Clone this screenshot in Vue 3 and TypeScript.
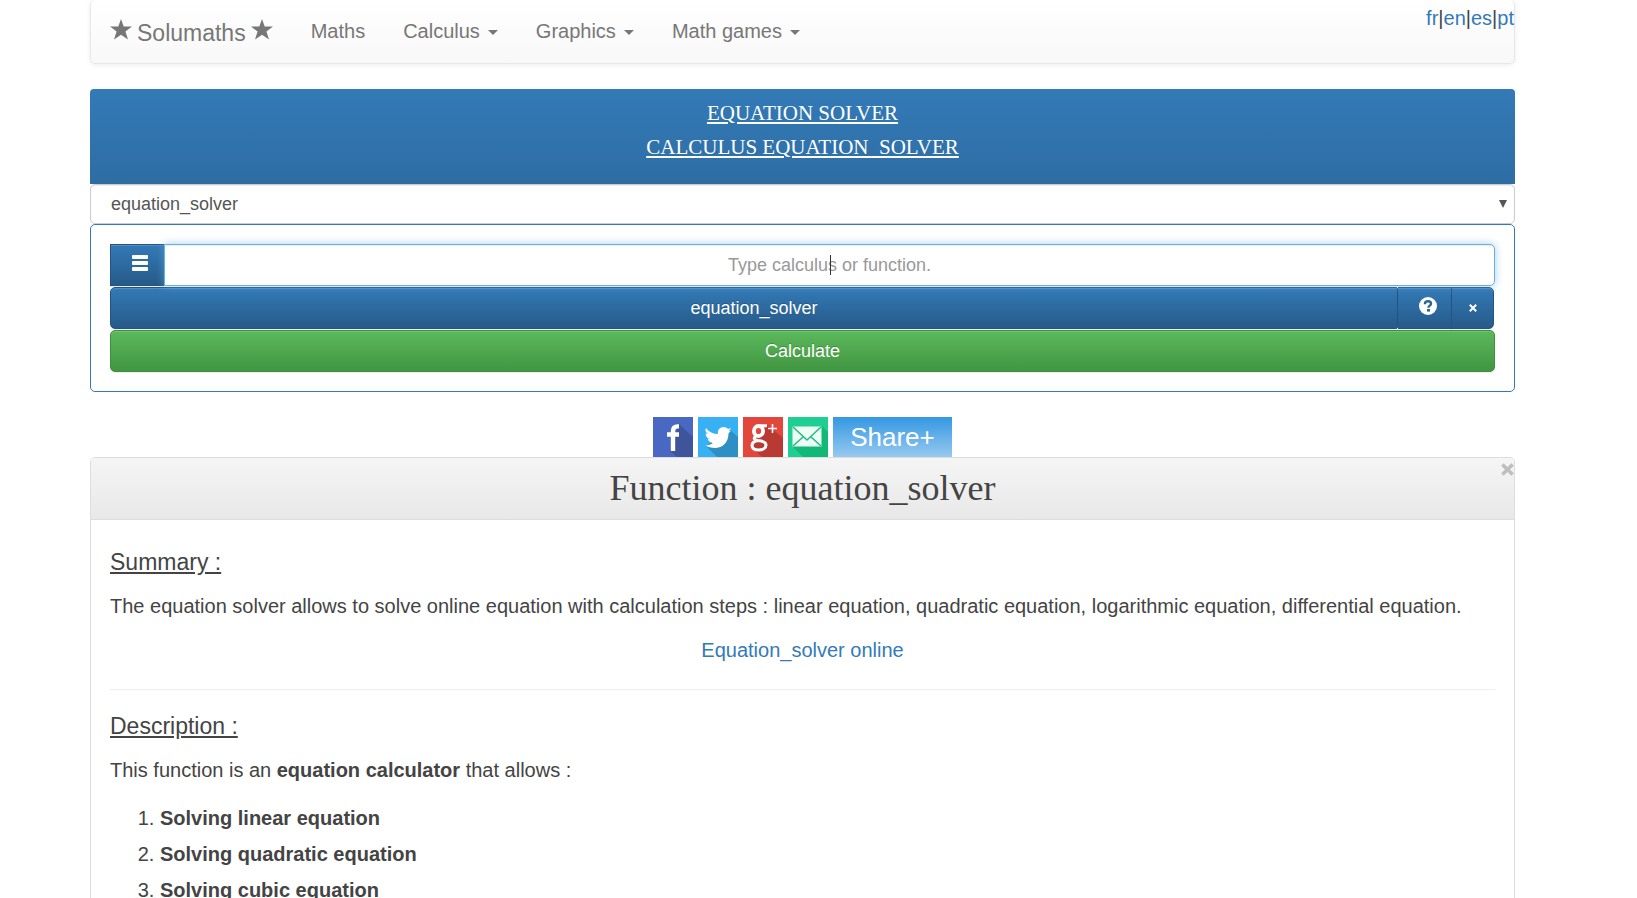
<script setup lang="ts">
import { ref } from 'vue'

interface MenuEntry {
  label: string
  dropdown: boolean
}

const menu: MenuEntry[] = [
  { label: 'Maths', dropdown: false },
  { label: 'Calculus', dropdown: true },
  { label: 'Graphics', dropdown: true },
  { label: 'Math games', dropdown: true },
]
const languages: string[] = ['fr', 'en', 'es', 'pt']
const abilities: string[] = [
  'Solving linear equation',
  'Solving quadratic equation',
  'Solving cubic equation',
]
const selected = ref('equation_solver')
const expression = ref('')
const star = '11,0 13.7,7.6 22,7.6 15.4,12.6 18,20.5 11,15.8 4,20.5 6.6,12.6 0,7.6 8.3,7.6'
</script>

<template>
  <div class="page">
    <header class="navbar">
      <a class="brand" href="#">
        <svg class="star" viewBox="0 0 22 21" aria-hidden="true"><polygon :points="star" /></svg>
        <span>Solumaths</span>
        <svg class="star" viewBox="0 0 22 21" aria-hidden="true"><polygon :points="star" /></svg>
      </a>
      <nav class="menu">
        <a v-for="item in menu" :key="item.label" href="#">
          {{ item.label }}<i v-if="item.dropdown" class="caret"></i>
        </a>
      </nav>
      <div class="languages">
        <template v-for="(code, i) in languages" :key="code"><span v-if="i > 0">|</span><a href="#">{{ code }}</a></template>
      </div>
    </header>

    <main>
      <div class="banner">
        <h1><a href="#">EQUATION SOLVER</a></h1>
        <h2><a href="#">CALCULUS EQUATION_SOLVER</a></h2>
      </div>

      <div class="picker">
        <select v-model="selected" aria-label="Function">
          <option value="equation_solver">equation_solver</option>
        </select>
        <svg class="arrow" viewBox="0 0 8 8" aria-hidden="true"><path d="M0 0h8L4 8z" /></svg>
      </div>

      <form class="calculator" @submit.prevent>
        <div class="row">
          <button type="button" class="btn primary menu-button" aria-label="Menu">
            <svg width="16" height="17" viewBox="0 0 16 17" aria-hidden="true">
              <rect width="16" height="4" rx="1" /><rect y="6" width="16" height="4" rx="1" /><rect y="12" width="16" height="4" rx="1" />
            </svg>
          </button>
          <div class="entry">
            <input v-model="expression" type="text" placeholder="Type calculus or function." aria-label="Calculus or function" />
            <span class="text-cursor"></span>
          </div>
        </div>
        <div class="row functions">
          <button type="button" class="btn primary function-button">equation_solver</button>
          <button type="button" class="btn primary help-button" aria-label="Help">
            <svg width="18" height="18" viewBox="0 0 18 18" aria-hidden="true">
              <circle cx="9" cy="9" r="9" />
              <path d="M6 7.2V6.6C6 4.9 7.2 4.2 9 4.2s3 .8 3 2.5c0 2-2.6 1.9-2.6 4" fill="none" stroke="#2a6496" stroke-width="2.4" />
              <path d="M8 12h3v2.6H8z" fill="#2a6496" />
            </svg>
          </button>
          <button type="button" class="btn primary remove-button" aria-label="Remove">
            <svg width="8" height="8" viewBox="0 0 8 8" aria-hidden="true"><path d="M.8.8l6.4 6.4M7.2.8L.8 7.2" fill="none" stroke="#fff" stroke-width="2" /></svg>
          </button>
        </div>
        <button type="submit" class="btn success">Calculate</button>
      </form>

      <div class="share">
        <a href="#" aria-label="Facebook">
          <svg viewBox="0 0 40 40"><path fill="#4968c4" d="M0 0h40v40H0z" /><path fill="#3e559c" d="M26 7l14 13v20H24l-7-6z" />
            <path fill="none" stroke="#fff" stroke-width="4.4" d="M20 34V14q0-4.600 4.600-4.600H26M14 17.500h12" />
          </svg>
        </a>
        <a href="#" aria-label="Twitter">
          <svg viewBox="0 0 40 40"><path fill="#37b1f3" d="M0 0h40v40H0z" /><path fill="#2e8fc5" d="M31 12l9 8v20H19L8 29z" />
            <path fill="#fff" d="M8 11c3 4 7 6 12 6-.8-4 2-7 5.500-7 2 0 3.500.8 4.500 2l3-1-2 3 2-.5-2.500 3C30.500 26 24 31 17 31c-4 0-7-1-9.500-2.500 3 0 5.500-.8 7.500-2.400-2.500-.3-4.500-1.700-5.300-4h2.300c-2.600-.8-4.200-2.800-4.400-5.700l2.500.7C7.500 15.500 7 13 8 11z" />
          </svg>
        </a>
        <a href="#" aria-label="Google plus">
          <svg viewBox="0 0 40 40"><path fill="#e3463b" d="M0 0h40v40H0z" /><path fill="#b93a32" d="M24 8l16 13v19H19L9 31z" />
            <g fill="none" stroke="#fff">
              <ellipse cx="15.500" cy="14" rx="4.600" ry="5" stroke-width="3.800" />
              <path stroke-width="3" d="M16 8.800h8M13 19c-3 2-2 4 2 4.500 5 .5 8 1.500 8 4.500s-3 5-7 5-7-1.500-7-4.500 3-4.500 6-5" />
              <path stroke-width="1.600" d="M29.500 7v9M25 11.500h9" />
            </g>
          </svg>
        </a>
        <a href="#" aria-label="Mail">
          <svg viewBox="0 0 40 40"><path fill="#1fce93" d="M0 0h40v40H0z" /><path fill="#12b877" d="M34 9l6 6v25H15L5 30z" />
            <path fill="#effdf7" d="M4.500 9.500h29v20h-29z" /><path fill="none" stroke="#25bd82" stroke-width="1.600" d="M5 10l14 13 14-13M5 29l10-9M33 29l-10-9" />
          </svg>
        </a>
        <a class="share-more" href="#">Share+</a>
      </div>

      <section class="panel">
        <div class="panel-heading">
          <h2>Function : equation_solver</h2>
          <button type="button" class="close" aria-label="Close">
            <svg width="13" height="13" viewBox="0 0 12 12" aria-hidden="true"><path d="M1.300 1.300l9.400 9.400M10.700 1.300l-9.400 9.400" fill="none" stroke="#bebebe" stroke-width="3.200" /></svg>
          </button>
        </div>
        <div class="panel-body">
          <h3>Summary :</h3>
          <p>The equation solver allows to solve online equation with calculation steps : linear equation, quadratic equation, logarithmic equation, differential equation.</p>
          <p class="centered"><a href="#">Equation_solver online</a></p>
          <hr />
          <h3>Description :</h3>
          <p>This function is an <strong>equation calculator</strong> that allows :</p>
          <ol>
            <li v-for="ability in abilities" :key="ability"><strong>{{ ability }}</strong></li>
          </ol>
        </div>
      </section>
    </main>
  </div>
</template>

<style>
body {
  background: #fff;
  overflow: hidden;
}
</style>

<style scoped>
.page {
  box-sizing: border-box;
  height: 100vh;
  overflow: hidden;
  padding: 0 122px 0 90px;
  font: 20px/28px "Liberation Sans", Arial, sans-serif;
  color: #444;
}
.page *, .page *::before {
  box-sizing: border-box;
}
a {
  color: #337ab7;
  text-decoration: none;
}
h1, h2, h3, p {
  margin: 0;
  font-weight: 400;
}
svg {
  display: block;
}
.navbar {
  display: flex;
  height: 64px;
  padding-left: 19px;
  border: 1px solid #e7e7e7;
  border-top: 0;
  border-radius: 5px;
  background: linear-gradient(#fff, #f8f8f8);
  box-shadow: 0 1px 5px rgba(0, 0, 0, 0.075);
}
.brand {
  display: flex;
  gap: 5px;
  padding: 19px 19px 0 0;
  font-size: 23px;
  color: #777;
  text-shadow: 0 1px 0 rgba(255, 255, 255, 0.25);
}
.star {
  width: 22px;
  height: 21px;
  fill: #777;
}
.menu {
  display: flex;
}
.menu a {
  display: flex;
  align-items: center;
  height: 62px;
  padding: 0 19px;
  color: #777;
}
.caret {
  margin: 2px 0 0 8px;
  border: 5px solid transparent;
  border-top-color: #777;
  border-bottom: 0;
}
.languages {
  margin-left: auto;
  padding-top: 4px;
}
.banner {
  height: 95px;
  margin-top: 25px;
  padding-top: 7px;
  border-radius: 4px 4px 0 0;
  background: linear-gradient(#337ab7, #2e6da4);
  font: 21px/34px Georgia, "Liberation Serif", serif;
  text-align: center;
}
.banner h1, .banner h2 {
  font-size: 21px;
}
.banner a {
  color: #fff;
  text-decoration: underline;
}
.picker {
  position: relative;
}
.picker select {
  display: block;
  width: 100%;
  height: 40px;
  padding: 0 20px;
  border: 1px solid #ccc;
  border-radius: 5px;
  background: #fff;
  box-shadow: inset 0 1px 1px rgba(0, 0, 0, 0.075);
  color: #555;
  font: inherit;
  font-size: 18px;
  appearance: none;
}
.arrow {
  position: absolute;
  top: 16px;
  right: 8px;
  width: 8px;
  height: 8px;
  fill: #555;
  pointer-events: none;
}
.calculator {
  display: flex;
  flex-direction: column;
  gap: 1px;
  padding: 19px;
  border: 1px solid #337ab7;
  border-radius: 5px;
}
.row {
  display: flex;
}
.functions {
  padding-right: 1px;
}
.btn {
  display: flex;
  align-items: center;
  justify-content: center;
  height: 42px;
  padding: 0;
  border: 1px solid;
  border-radius: 5px;
  box-shadow: inset 0 1px 0 rgba(255, 255, 255, 0.15), 0 1px 1px rgba(0, 0, 0, 0.075);
  color: #fff;
  font: inherit;
  font-size: 18px;
  text-shadow: 0 -1px 0 rgba(0, 0, 0, 0.2);
}
.btn svg {
  fill: #fff;
}
.primary {
  border-color: #245580;
  background: linear-gradient(#337ab7, #265a88);
}
.success {
  border-color: #3e8f3e;
  background: linear-gradient(#5cb85c, #419641);
}
.menu-button {
  width: 54px;
  padding: 0 0 3px 4px;
  border-right: 0;
  border-radius: 0;
}
.entry {
  position: relative;
  flex: 1;
}
.entry input {
  display: block;
  width: 100%;
  height: 42px;
  padding: 0 19px;
  border: 1px solid #66afe9;
  border-radius: 0 5px 5px 0;
  outline: 0;
  background: #fff;
  box-shadow: inset 0 1px 1px rgba(0, 0, 0, 0.075), 0 0 8px rgba(102, 175, 233, 0.6);
  color: #555;
  font: inherit;
  font-size: 18px;
  text-align: center;
}
.entry input::placeholder {
  color: #999;
  opacity: 1;
}
.text-cursor {
  position: absolute;
  top: 11px;
  left: 50%;
  width: 1px;
  height: 20px;
  background: #333;
}
.function-button {
  flex: 1;
  border-radius: 5px 2px 2px 5px;
}
.help-button {
  width: 54px;
  padding: 0 0 4px 6px;
  border-left: 0;
  border-radius: 0;
}
.remove-button {
  width: 43px;
  margin-left: -1px;
  border-radius: 0 5px 5px 0;
}
.share {
  display: flex;
  justify-content: center;
  gap: 5px;
  height: 65px;
  padding-top: 25px;
}
.share svg {
  width: 40px;
  height: 40px;
}
.share-more {
  width: 119px;
  background: linear-gradient(#3498e2, #97c9f0);
  color: #fff;
  font-size: 26px;
  line-height: 40px;
  text-align: center;
}
.panel {
  border: 1px solid #ddd;
  border-radius: 5px;
}
.panel-heading {
  position: relative;
  height: 62px;
  border-bottom: 1px solid #ddd;
  border-radius: 4px 4px 0 0;
  background: linear-gradient(#f5f5f5, #e8e8e8);
  text-align: center;
}
.panel-heading h2 {
  font: 36px/60px Georgia, "Liberation Serif", serif;
}
.close {
  position: absolute;
  top: 5px;
  right: 0;
  padding: 0;
  border: 0;
  background: none;
}
.panel-body {
  padding: 28px 19px;
}
h3 {
  margin-bottom: 16px;
  font-size: 23px;
  text-decoration: underline;
}
p {
  margin-bottom: 16px;
}
.centered {
  text-align: center;
}
hr {
  height: 1px;
  margin: 25px 0 22px;
  border: 0;
  background: #eee;
}
ol {
  margin: 0;
  padding: 0 0 0 50px;
  line-height: 36px;
}
</style>
